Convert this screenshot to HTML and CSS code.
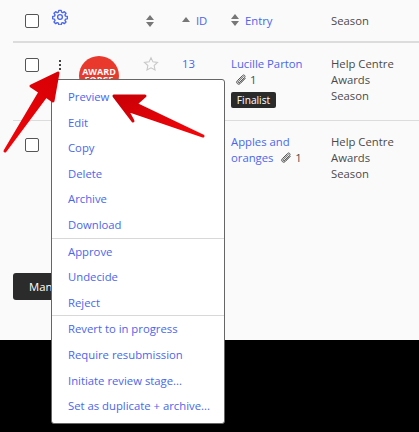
FILE: index.html
```html
<!DOCTYPE html>
<html>
<head>
    <title>Entries</title>
    <link rel="stylesheet" href="styles.css">
</head>
<body>
    <div class="page">
        <div class="row head-row">
            <div class="cell"><span class="checkbox"></span></div>
            <div class="cell gear-cell">
                <svg class="gear" viewBox="0 0 24 24"><path d="M10.2 2h3.6l.5 2.8 1.9.8 2.3-1.6 2.5 2.5-1.6 2.3.8 1.9 2.8.5v3.6l-2.8.5-.8 1.9 1.6 2.3-2.5 2.5-2.3-1.6-1.9.8-.5 2.8h-3.6l-.5-2.8-1.9-.8-2.3 1.6-2.5-2.5 1.6-2.3-.8-1.9-2.8-.5v-3.6l2.8-.5.8-1.9-1.6-2.3 2.5-2.5 2.3 1.6 1.9-.8z"/><circle cx="12" cy="12" r="3.6"/></svg>
            </div>
            <div class="cell"></div>
            <div class="cell sort-cell">
                <svg class="sort" viewBox="0 0 8 12"><path d="M4 0l4 5H0zM4 12L0 7h8z"/></svg>
            </div>
            <div class="cell link-cell">
                <svg class="sort-up" viewBox="0 0 8 5"><path d="M4 0l4 5H0z"/></svg>
                <a>ID</a>
            </div>
            <div class="cell link-cell">
                <svg class="sort" viewBox="0 0 8 12"><path d="M4 0l4 5H0zM4 12L0 7h8z"/></svg>
                <a>Entry</a>
            </div>
            <div class="cell">Season</div>
        </div>

        <div class="row entry-row first">
            <div class="cell"><span class="checkbox"></span></div>
            <div class="cell"><span class="dots"><i></i><i></i><i></i></span></div>
            <div class="cell"><div class="logo">AWARD<br>FORCE</div></div>
            <div class="cell">
                <svg class="star" viewBox="0 0 24 24"><path d="M12 2.5l2.9 6.3 6.9.8-5.1 4.7 1.4 6.8-6.1-3.4-6.1 3.4 1.4-6.8-5.1-4.7 6.9-.8z"/></svg>
            </div>
            <div class="cell"><a>13</a></div>
            <div class="cell entry-cell">
                <a>Lucille Parton</a>
                <span class="files"><svg class="clip" viewBox="0 0 12 12"><path d="M10.5 4.2L5.2 9.6a2 2 0 0 1-2.9-2.9l5.4-5.3a1.3 1.3 0 0 1 1.9 1.9L4.3 8.6M8.5 2.2L3.4 7.4a.9.9 0 0 0 1.3 1.3l5-5"/></svg> 1</span>
                <div class="badge">Finalist</div>
            </div>
            <div class="cell season-cell">Help Centre Awards Season</div>
        </div>

        <div class="row entry-row">
            <div class="cell"><span class="checkbox"></span></div>
            <div class="cell"></div>
            <div class="cell"></div>
            <div class="cell"></div>
            <div class="cell"></div>
            <div class="cell entry-cell">
                <a>Apples and oranges</a>
                <span class="files"><svg class="clip" viewBox="0 0 12 12"><path d="M10.5 4.2L5.2 9.6a2 2 0 0 1-2.9-2.9l5.4-5.3a1.3 1.3 0 0 1 1.9 1.9L4.3 8.6M8.5 2.2L3.4 7.4a.9.9 0 0 0 1.3 1.3l5-5"/></svg> 1</span>
            </div>
            <div class="cell season-cell">Help Centre Awards Season</div>
        </div>

        <div class="actions">
            <button class="manage">Manage</button>
        </div>
    </div>
    <div class="footer"></div>

    <div class="menu">
        <div class="menu-group">
            <a>Preview</a>
            <a>Edit</a>
            <a>Copy</a>
            <a>Delete</a>
            <a>Archive</a>
            <a>Download</a>
        </div>
        <div class="menu-group">
            <a>Approve</a>
            <a>Undecide</a>
            <a>Reject</a>
        </div>
        <div class="menu-group">
            <a>Revert to in progress</a>
            <a>Require resubmission</a>
            <a>Initiate review stage...</a>
            <a>Set as duplicate + archive...</a>
        </div>
    </div>

    <svg class="arrows" viewBox="0 0 419 432">
        <defs>
            <linearGradient id="arrowOne" x1="0" y1="1" x2="1" y2="0">
                <stop offset="0" stop-color="#f00408"/>
                <stop offset="1" stop-color="#d60006"/>
            </linearGradient>
            <linearGradient id="arrowTwo" x1="0" y1="0" x2="1" y2="1">
                <stop offset="0" stop-color="#c80006"/>
                <stop offset="1" stop-color="#f5060a"/>
            </linearGradient>
        </defs>
        <path class="arrow" fill="url(#arrowOne)" stroke="url(#arrowOne)" d="M58 73L31 86L40 92L5 151L46 96L53 101z"/>
        <path class="arrow" fill="url(#arrowTwo)" stroke="url(#arrowTwo)" d="M114 96L145 96L136 104L203 136L127 110L133 121z"/>
    </svg>
</body>
</html>
```

FILE: styles.css
```css
body {
    font-family: "Open Sans", sans-serif;
    font-size: 11.3px;
    line-height: 16px;
    margin: 0;
    color: #4a4a4a;
    background: #000;
    overflow: hidden;
}

a {
    color: #4a66ee;
}

.page {
    height: 340px;
    padding-left: 13px;
    background: #fafafa;
}

.row {
    display: grid;
    grid-template-columns: 38px 28px 64px 39px 49px 100px 88px;
}

.head-row {
    height: 43px;
    padding-top: 13px;
    box-sizing: border-box;
    border-bottom: 2px solid #dcdcdc;
}

.entry-row {
    height: 78px;
    padding-top: 13px;
    box-sizing: border-box;
}

.entry-row.first {
    border-bottom: 1px solid #dcdcdc;
}

.checkbox {
    display: block;
    width: 12px;
    height: 12px;
    margin: 1px 0 0 12px;
    border: 1px solid #555;
    border-radius: 2px;
    background: #fff;
}

.entry-row .checkbox {
    margin-top: 4px;
}

.entry-row.first .checkbox {
    margin-top: 2px;
}

.gear {
    display: block;
    width: 16px;
    height: 16px;
    margin: -4px 0 0 1px;
    fill: none;
    stroke: #4a66ee;
    stroke-width: 2;
    stroke-linejoin: round;
}

.sort,
.sort-up {
    width: 8px;
    fill: #777;
}

.sort {
    height: 12px;
}

.sort-up {
    height: 5px;
    margin: 0 3px 3px 0;
}

.sort-cell .sort {
    display: block;
    margin: 2px 0 0 3px;
}

.link-cell .sort {
    margin-right: 3px;
    vertical-align: -1px;
}

.dots {
    display: flex;
    flex-direction: column;
    gap: 2px;
    margin: 4px 0 0 8px;
}

.dots i {
    width: 2px;
    height: 2px;
    background: #444;
}

.logo {
    width: 40px;
    height: 40px;
    border-radius: 50%;
    background: #e8392c;
    color: #fff;
    font-size: 9px;
    font-weight: 700;
    line-height: 8px;
    text-align: center;
    padding-top: 12px;
    box-sizing: border-box;
}

.star {
    display: block;
    width: 16px;
    height: 16px;
    fill: none;
    stroke: #c8c8c8;
    stroke-width: 1.6;
}

.entry-cell {
    padding-right: 15px;
}

.season-cell {
    padding-right: 20px;
}

.files {
    display: inline-block;
    margin-left: 4px;
}

.clip {
    width: 12px;
    height: 12px;
    fill: none;
    stroke: #555;
    stroke-width: 1;
    vertical-align: -2px;
}

.badge {
    width: 45px;
    height: 16px;
    margin-top: 4px;
    background: #2b2b2b;
    color: #fff;
    font-size: 10.2px;
    border-radius: 2px;
    text-align: center;
}

.actions {
    margin-top: 74px;
}

.manage {
    display: block;
    width: 90px;
    height: 27px;
    padding: 0 0 0 16px;
    border: none;
    border-radius: 3px;
    background: #2b2b2b;
    color: #fff;
    font: 11.3px "Open Sans", sans-serif;
    text-align: left;
}

.footer {
    height: 92px;
}

.menu {
    position: absolute;
    left: 51px;
    top: 79px;
    width: 174px;
    box-sizing: border-box;
    padding: 4px 0;
    background: #fff;
    border: 1px solid #666;
    border-radius: 3px;
}

.menu-group + .menu-group {
    border-top: 1px solid #d8d8d8;
}

.menu-group a {
    display: block;
    height: 25.6px;
    line-height: 25.6px;
    padding-left: 16px;
    white-space: nowrap;
}

.arrows {
    position: absolute;
    left: 0;
    top: 0;
    width: 419px;
    height: 432px;
    pointer-events: none;
}

.arrow {
    stroke-width: 3;
    stroke-linejoin: round;
}
```
